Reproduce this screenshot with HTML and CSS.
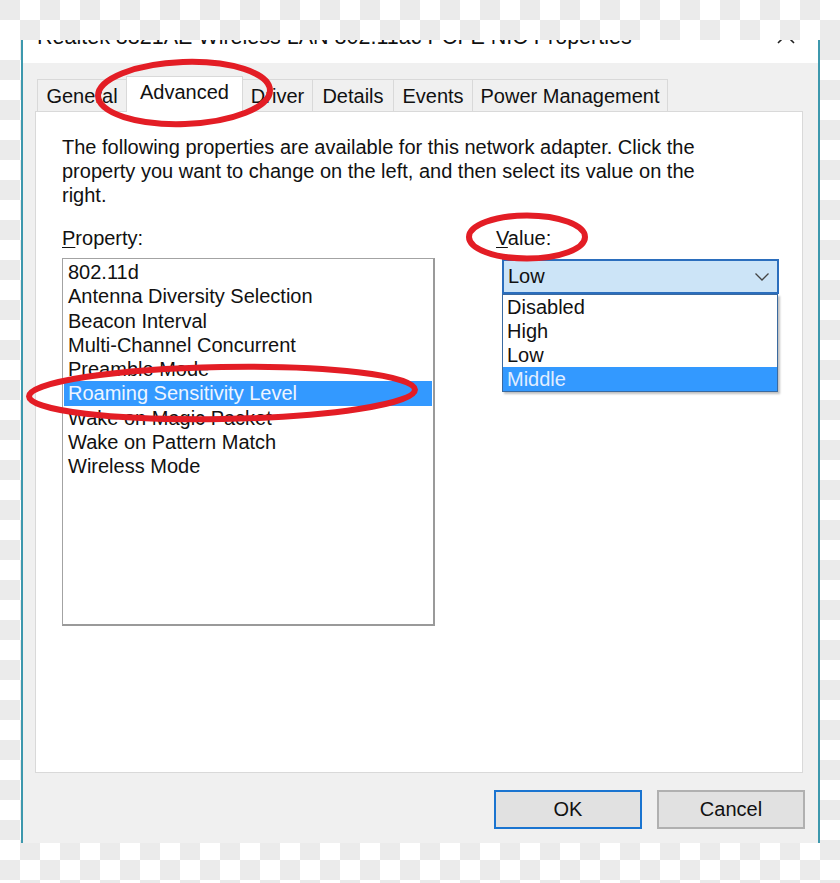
FILE: index.html
```html
<!DOCTYPE html>
<html lang="en">
<head>
<meta charset="utf-8">
<title>Adapter Properties</title>
<link rel="stylesheet" href="styles.css">
</head>
<body>
<div class="topstrip"></div>
<div class="window">
  <div class="titlebar">
    <span class="title">Realtek 8821AE Wireless LAN 802.11ac PCI-E NIC Properties</span>
    <svg class="close" width="18" height="18" viewBox="0 0 18 18"><path d="M1 1 L17 17 M17 1 L1 17" stroke="#222" stroke-width="1.6" fill="none"/></svg>
  </div>
  <div class="body">
    <div class="tabs">
      <div class="tab tab-general">General</div>
      <div class="tab tab-advanced active">Advanced</div>
      <div class="tab tab-driver">Driver</div>
      <div class="tab tab-details">Details</div>
      <div class="tab tab-events">Events</div>
      <div class="tab tab-power">Power Management</div>
    </div>
    <div class="panel">
      <p class="intro">The following properties are available for this network adapter. Click the<br>property you want to change on the left, and then select its value on the<br>right.</p>
      <div class="columns">
        <div class="col-left">
          <div class="label"><u>P</u>roperty:</div>
          <div class="listbox">
            <div class="item">802.11d</div>
            <div class="item">Antenna Diversity Selection</div>
            <div class="item">Beacon Interval</div>
            <div class="item">Multi-Channel Concurrent</div>
            <div class="item">Preamble Mode</div>
            <div class="item selected">Roaming Sensitivity Level</div>
            <div class="item">Wake on Magic Packet</div>
            <div class="item">Wake on Pattern Match</div>
            <div class="item">Wireless Mode</div>
          </div>
        </div>
        <div class="col-right">
          <div class="label"><u>V</u>alue:</div>
          <div class="combo-wrap">
            <div class="combo">
              <span>Low</span>
              <svg class="chevron" width="14" height="8" viewBox="0 0 14 8"><path d="M0.5 0.5 L7 7 L13.5 0.5" stroke="#444" stroke-width="1.3" fill="none"/></svg>
            </div>
            <div class="dropdown">
              <div class="opt">Disabled</div>
              <div class="opt">High</div>
              <div class="opt">Low</div>
              <div class="opt selected">Middle</div>
            </div>
          </div>
        </div>
      </div>
    </div>
    <div class="buttons">
      <button class="btn btn-default">OK</button>
      <button class="btn">Cancel</button>
    </div>
  </div>
</div>
<svg class="annotations" width="840" height="883" viewBox="0 0 840 883">
  <ellipse cx="184" cy="93" rx="86" ry="31" transform="rotate(-2 184 93)"/>
  <ellipse cx="527" cy="237" rx="58" ry="21.5"/>
  <ellipse cx="222" cy="393" rx="193" ry="26" transform="rotate(-1 222 393)"/>
</svg>
</body>
</html>
```

FILE: styles.css
```css
* { box-sizing: border-box; }

html, body {
  margin: 0;
  padding: 0;
}

body {
  width: 840px;
  height: 883px;
  overflow: hidden;
  position: relative;
  font-family: "Liberation Sans", Arial, sans-serif;
  font-size: 20px;
  color: #111;
  background-color: #fff;
  background-image: conic-gradient(#ebebeb 25%, #fff 0 50%, #ebebeb 0 75%, #fff 0);
  background-size: 40px 40px;
}

.topstrip {
  height: 40px;
  background-color: #fff;
  background-image: conic-gradient(#fff 25%, #ebebeb 0 50%, #fff 0 75%, #ebebeb 0);
  background-size: 40px 40px;
}

.window {
  margin-left: 21px;
  width: 799px;
  height: 803px;
  border-left: 2px solid #3d98ad;
  border-right: 2px solid #3d98ad;
  background: #f0f0f0;
  overflow: hidden;
}

.titlebar {
  height: 23px;
  background: #fff;
  display: flex;
  justify-content: space-between;
  align-items: flex-start;
  padding: 0 23px 0 14px;
  overflow: hidden;
}

.title {
  display: block;
  font-size: 21.5px;
  line-height: 20px;
  margin-top: -13.5px;
  white-space: nowrap;
  color: #111;
}

.close {
  margin-top: -14px;
  flex: none;
}

.body {
  padding: 13px 15px 0 12px;
}

.tabs {
  display: flex;
  align-items: flex-end;
  height: 36px;
  margin-bottom: -1px;
  padding-left: 2px;
}

.tab {
  height: 33px;
  margin-right: -1px;
  border: 1px solid #d9d9d9;
  border-bottom: none;
  background: #f0f0f0;
  display: flex;
  align-items: center;
  justify-content: center;
  padding-top: 1px;
  white-space: nowrap;
  color: #111;
}

.tab.active {
  height: 36px;
  background: #fff;
  position: relative;
  z-index: 2;
  padding-top: 0;
  padding-bottom: 4px;
}

.tab-general { width: 90px; }
.tab-advanced { width: 117px; }
.tab-driver { width: 71px; }
.tab-details { width: 82px; }
.tab-events { width: 80px; }
.tab-power { width: 196px; }

.panel {
  width: 768px;
  height: 662px;
  background: #fff;
  border: 1px solid #d9d9d9;
  padding: 23px 0 0 26px;
  position: relative;
  z-index: 1;
}

.intro {
  margin: 0;
  line-height: 24px;
  white-space: nowrap;
}

.columns {
  display: flex;
  gap: 61px;
  margin-top: 19px;
}

.col-left { width: 373px; }
.col-right { width: 283px; }

.label {
  line-height: 24px;
  height: 24px;
}

.label u {
  text-decoration-thickness: 1px;
  text-underline-offset: 2px;
}

.listbox {
  margin-top: 8px;
  width: 373px;
  height: 368px;
  border: 1px solid #a3a3a3;
  border-right: 2px solid #9a9a9a;
  border-bottom: 2px solid #9a9a9a;
  padding: 1px;
  background: #fff;
}

.item {
  height: 24.25px;
  line-height: 24.25px;
  padding-left: 4px;
  white-space: nowrap;
}

.item.selected {
  background: #3399ff;
  color: #eef5ff;
}

.combo-wrap {
  margin-top: 9px;
  margin-left: 6px;
  width: 277px;
  position: relative;
}

.combo {
  height: 35px;
  border: 2px solid #2b6ebd;
  background: #cce4f7;
  display: flex;
  align-items: center;
  justify-content: space-between;
  padding: 0 8px 0 4px;
}

.dropdown {
  position: absolute;
  top: 35px;
  left: 0;
  width: 276px;
  height: 98px;
  border: 1px solid #3a6aa0;
  background: #fff;
  box-shadow: 2px 2px 2px rgba(0, 0, 0, 0.25);
  z-index: 3;
}

.opt {
  height: 24px;
  line-height: 24px;
  padding-left: 4px;
}

.opt.selected {
  background: #3399ff;
  color: #e2eeff;
}

.buttons {
  display: flex;
  justify-content: flex-end;
  gap: 15px;
  margin-top: 17px;
  padding-right: 0;
  margin-right: -2px;
}

.btn {
  width: 148px;
  height: 39px;
  font-family: "Liberation Sans", Arial, sans-serif;
  font-size: 20px;
  color: #111;
  background: #e1e1e1;
  border: 2px solid #b0b0b0;
  padding: 0;
  margin: 0;
}

.btn-default {
  border-color: #1a74d0;
}

.annotations {
  position: absolute;
  top: 0;
  left: 0;
  pointer-events: none;
  z-index: 10;
}

.annotations ellipse {
  fill: none;
  stroke: #e31d25;
  stroke-width: 6;
}
```
